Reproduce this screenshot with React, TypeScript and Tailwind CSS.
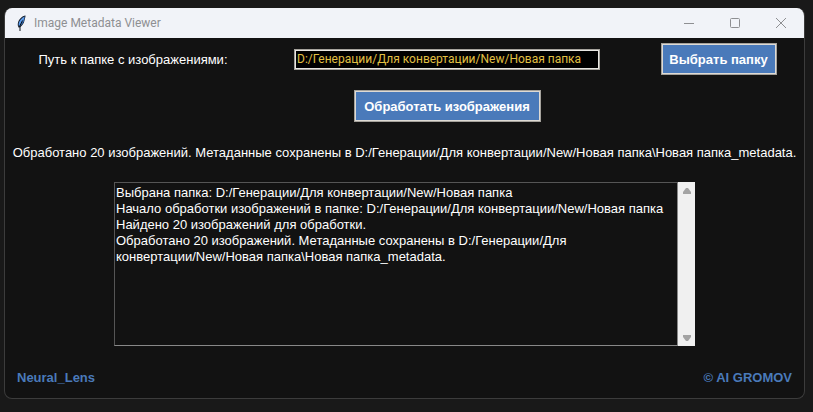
import { useState } from "react";

const FOLDER = "D:/Генерации/Для конвертации/New/Новая папка";
const STATUS =
  "Обработано 20 изображений. Метаданные сохранены в D:/Генерации/Для конвертации/New/Новая папка\\Новая папка_metadata.";
const LOG = [
  "Выбрана папка: D:/Генерации/Для конвертации/New/Новая папка",
  "Начало обработки изображений в папке: D:/Генерации/Для конвертации/New/Новая папка",
  "Найдено 20 изображений для обработки.",
  "Обработано 20 изображений. Метаданные сохранены в D:/Генерации/Для",
  "конвертации/New/Новая папка\\Новая папка_metadata.",
].join("\n");

function Feather() {
  return (
    <svg className="h-4 w-4" viewBox="0 0 16 16" aria-hidden="true">
      <path d="M12.500 0.500C9 1 6 4 5 7.500C4.500 9.500 4.800 11 5.500 12.500L6.500 12.500C9 11 11 8.500 11.500 5.500C12 3.500 12.500 2 12.500 0.500Z" fill="#16202e" />
      <path d="M11.600 1.500C8.500 3 6.300 5.500 5.800 8C5.500 9.300 5.700 10.300 6 11.300C8.800 10 10.800 7.500 11 5C11.300 3.500 11.600 2.500 11.600 1.500Z" fill="#5b9bea" />
      <path d="M11.300 3.500C10.800 7 9.300 9.300 7 10.700L9 7Z" fill="#2f62a8" />
      <path d="M9.500 5.500L7 10.500L7 16" fill="none" stroke="#0b1018" strokeWidth="1" />
    </svg>
  );
}

function ActionButton({ children, width }: { children: string; width: string }) {
  return (
    <button
      type="button"
      className={`h-8 border border-[#a5a29c] bg-[#4a7aba] pt-px text-[13px] leading-4 font-bold whitespace-nowrap text-white inset-ring inset-ring-[#dedad4] ${width}`}
    >
      {children}
    </button>
  );
}

function TitleBar() {
  return (
    <header className="flex h-[30px] items-center bg-[#f1f3f8] pl-2 text-[#8e8f92]">
      <Feather />
      <h1 className="ml-[5px] flex-1 font-[Roboto,'Noto_Sans',sans-serif] text-[12px] leading-4">
        Image Metadata Viewer
      </h1>
      <div className="flex h-full">
        <button type="button" aria-label="Свернуть" className="flex w-[46px] items-center justify-center">
          <svg className="h-3 w-3" viewBox="0 0 12 12" fill="none" stroke="currentColor"><path d="M1 6.500H11" /></svg>
        </button>
        <button type="button" aria-label="Развернуть" className="flex w-[46px] items-center justify-center">
          <svg className="h-3 w-3" viewBox="0 0 12 12" fill="none" stroke="currentColor"><rect x="1.500" y="1.500" width="9" height="9" rx="1" /></svg>
        </button>
        <button type="button" aria-label="Закрыть" className="flex w-[46px] items-center justify-center">
          <svg className="h-3 w-3" viewBox="0 0 12 12" fill="none" stroke="currentColor"><path d="M1 1L11 11M11 1L1 11" /></svg>
        </button>
      </div>
    </header>
  );
}

export default function App() {
  const [folder, setFolder] = useState(FOLDER);

  return (
    <div className="min-h-screen bg-[#191919] pt-2 pr-2 pb-3 pl-1 font-['Liberation_Sans',Arial,sans-serif] text-[13px] leading-4 text-white">
      <main className="overflow-hidden rounded-lg border border-t-0 border-[#3c3c3c] bg-[#121212]">
        <TitleBar />
        <div className="grid grid-cols-[256fr_372fr_171fr] items-center justify-items-center gap-y-[15px] pt-[5px]">
          <label htmlFor="folder" className="pt-px">Путь к папке с изображениями:</label>
          <input
            id="folder"
            type="text"
            value={folder}
            onChange={(e) => setFolder(e.target.value)}
            className="h-[21px] w-[306px] border border-[#a5a29c] bg-black px-[2px] font-[Roboto,'Noto_Sans',sans-serif] text-[12px] leading-4 text-[#e2c044] inset-ring inset-ring-[#e8e6e2] outline-none"
          />
          <ActionButton width="w-[116px]">Выбрать папку</ActionButton>
          <div className="col-start-2">
            <ActionButton width="w-[187px]">Обработать изображения</ActionButton>
          </div>
        </div>
        <p role="status" className="mt-[23px] text-center">{STATUS}</p>
        <div className="mx-auto mt-[21px] flex h-[164px] w-[581px]">
          <textarea
            readOnly
            aria-label="Журнал"
            value={LOG}
            className="flex-1 resize-none overflow-hidden border border-t-[#555] border-r-[#888] border-b-[#888] border-l-[#555] px-px pt-[2px] whitespace-pre-wrap outline-none"
          />
          <div className="flex w-[17px] flex-col items-center justify-between bg-[#f0f0f0] pt-[5px] pb-1 text-[#a3a3a3]">
            <button type="button" aria-label="Вверх">
              <svg className="block h-2 w-2" viewBox="0 0 8 8" fill="currentColor"><path d="M3 1H5L8 5V7H0V5Z" /></svg>
            </button>
            <button type="button" aria-label="Вниз">
              <svg className="block h-2 w-2" viewBox="0 0 8 8" fill="currentColor"><path d="M3 7H5L8 3V1H0V3Z" /></svg>
            </button>
          </div>
        </div>
        <footer className="flex justify-between px-3 pt-6 pb-3 font-bold text-[#4a7aba]">
          <a href="#neural-lens">Neural_Lens</a>
          <a href="#ai-gromov">© AI GROMOV</a>
        </footer>
      </main>
    </div>
  );
}
